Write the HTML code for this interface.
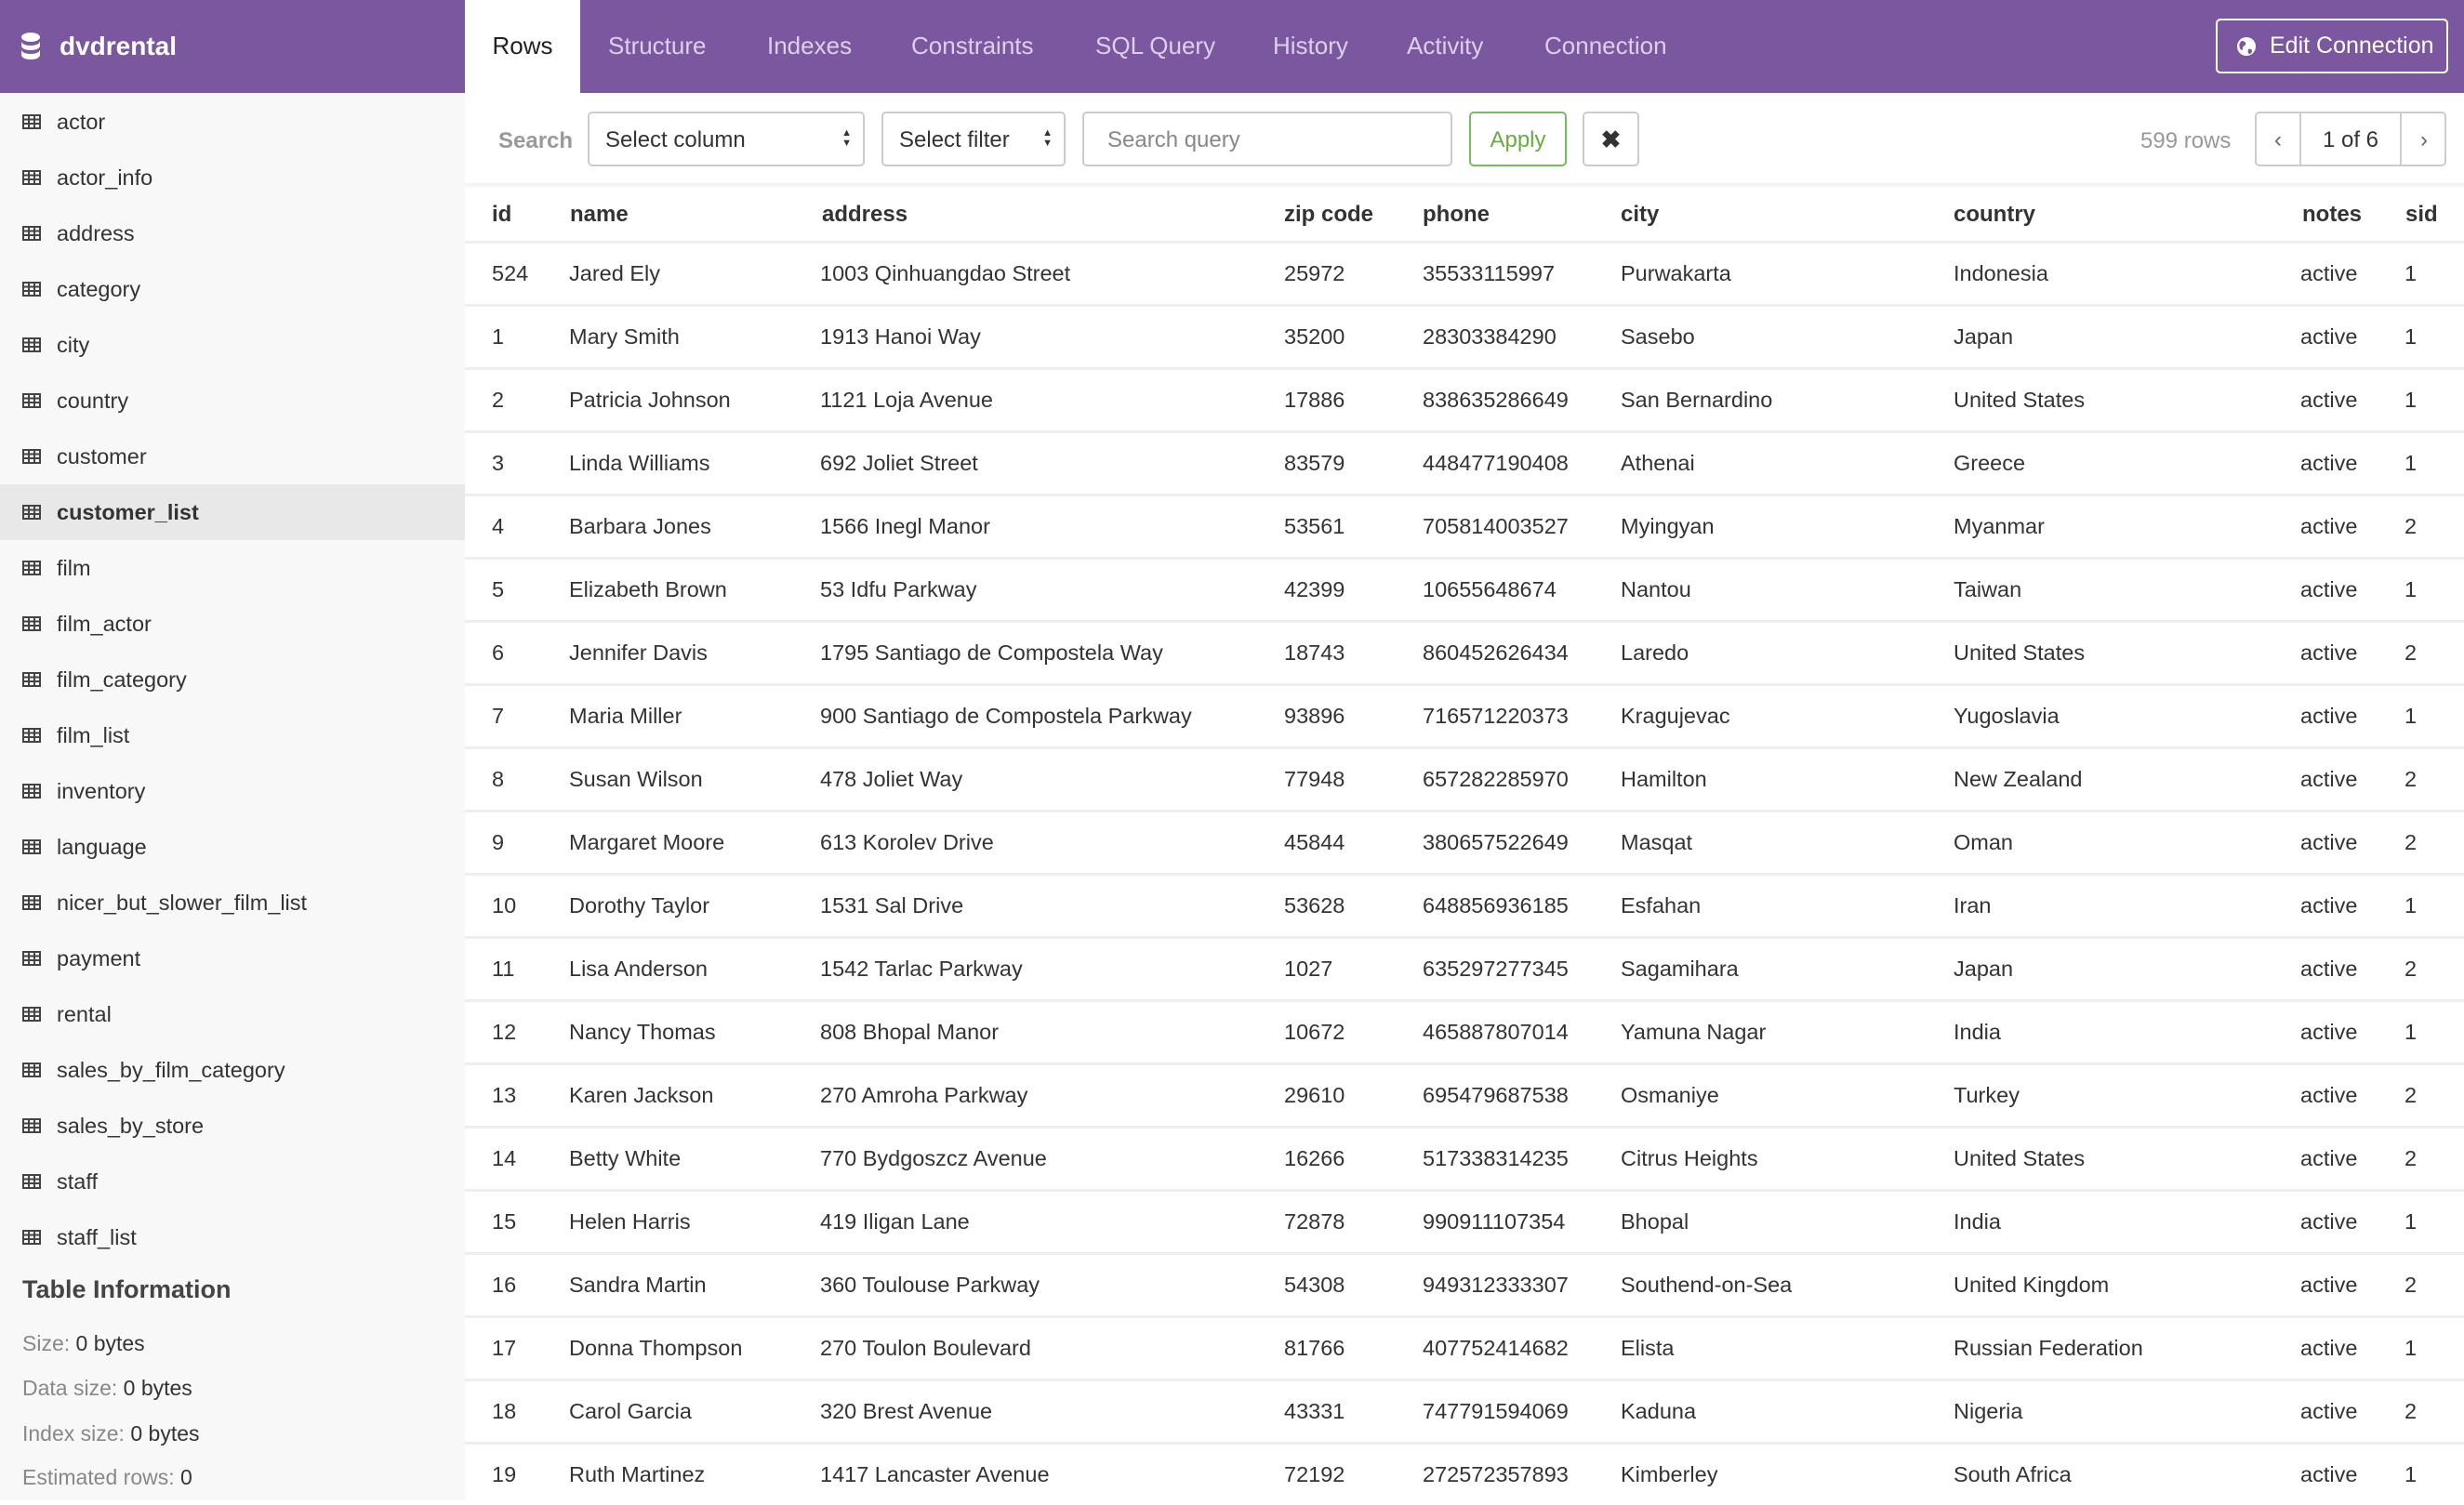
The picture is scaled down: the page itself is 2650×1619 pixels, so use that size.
<!DOCTYPE html>
<html><head><meta charset="utf-8"><style>
*{box-sizing:border-box;margin:0;padding:0}
body{width:2650px;height:1614px;overflow:hidden;font-family:"Liberation Sans",Helvetica,Arial,sans-serif;color:#333;background:#fff;position:relative}
.top{position:absolute;left:0;top:0;width:2650px;height:100px;background:#7a579e}
.brand{position:absolute;left:0;top:0;width:500px;height:100px;color:#fff;font-weight:bold;font-size:28px;line-height:100px;padding-left:64px}
.brand svg{position:absolute;left:23px;top:35px}
.tab{position:absolute;top:0;height:100px;line-height:98px;font-size:26px;color:#ddd0ea}
.tab.active{background:#fff;color:#222;left:500px;width:124px;text-align:center}
.editbtn{position:absolute;left:2383px;top:20px;width:250px;height:59px;border:2px solid #fff;border-radius:5px;color:#fff;font-size:25px;line-height:55px;padding-left:56px}
.editbtn svg{position:absolute;left:20px;top:17px}
.side{position:absolute;left:0;top:100px;width:500px;height:1514px;background:#f8f8f8}
.item{position:absolute;left:0;width:500px;height:60px;line-height:60px;font-size:23.5px;color:#333;padding-left:61px}
.item.sel{background:#e8e8e8;font-weight:bold}
.item svg{position:absolute;left:24px;top:22px}
.info{position:absolute;left:24px;font-size:23px;color:#888}
.info b{font-weight:normal;color:#333}
.lbl{position:absolute;left:536px;top:138px;font-size:24px;color:#999;font-weight:bold}
.box{position:absolute;top:120px;height:59px;border:2px solid #ccc;border-radius:5px;font-size:24px;line-height:57px;padding-left:17px;color:#333;background:#fff}
.arr{position:absolute;right:12px;top:16px;font-size:11px;line-height:11px;color:#333}
.shadow{position:absolute;left:500px;top:197px;width:2150px;height:6px;background:linear-gradient(#f0f0f0,#fff)}
.th{position:absolute;top:217px;font-size:24px;font-weight:bold;color:#333}
.row{position:absolute;left:500px;width:2150px;height:68px;border-top:3px solid #eeeeee}
.c{position:absolute;top:0;line-height:64px;font-size:23.5px;color:#333;white-space:nowrap}
</style></head><body>
<div class="top"></div>
<div class="brand"><svg width="20" height="30" viewBox="0 0 20 30"><ellipse cx="10" cy="5" rx="10" ry="5" fill="#fff"/><path d="M0 9c0 3 4 5 10 5s10-2 10-5v5c0 3-4 5-10 5S0 17 0 14z" fill="#fff"/><path d="M0 18c0 3 4 5 10 5s10-2 10-5v6c0 3-4 5-10 5S0 27 0 24z" fill="#fff"/></svg>dvdrental</div>
<div class="tab active">Rows</div>
<div class="tab" style="left:654px">Structure</div>
<div class="tab" style="left:825px">Indexes</div>
<div class="tab" style="left:980px">Constraints</div>
<div class="tab" style="left:1178px">SQL Query</div>
<div class="tab" style="left:1369px">History</div>
<div class="tab" style="left:1513px">Activity</div>
<div class="tab" style="left:1661px">Connection</div>
<div class="editbtn"><svg width="22" height="22" viewBox="0 0 22 22"><circle cx="11" cy="11" r="10" fill="#fff"/><path d="M6 5c3 0 5 2 4 4s-3 1-3 4-2 2-3 0C3 10 3 7 6 5zM13 14c2-1 4 0 4 2s-2 3-3 3-2-3-1-5z" fill="#7a579e"/></svg>Edit Connection</div>

<div class="side"></div>
<div style="position:absolute;left:0;top:3px">
<div class="item" style="top:98px"><svg width="20" height="16" viewBox="0 0 20 16"><path d="M1 1h18v14H1zM1 5.5h18M1 10h18M7 1v14M13 1v14" fill="none" stroke="#444" stroke-width="2"/></svg>actor</div>
<div class="item" style="top:158px"><svg width="20" height="16" viewBox="0 0 20 16"><path d="M1 1h18v14H1zM1 5.5h18M1 10h18M7 1v14M13 1v14" fill="none" stroke="#444" stroke-width="2"/></svg>actor_info</div>
<div class="item" style="top:218px"><svg width="20" height="16" viewBox="0 0 20 16"><path d="M1 1h18v14H1zM1 5.5h18M1 10h18M7 1v14M13 1v14" fill="none" stroke="#444" stroke-width="2"/></svg>address</div>
<div class="item" style="top:278px"><svg width="20" height="16" viewBox="0 0 20 16"><path d="M1 1h18v14H1zM1 5.5h18M1 10h18M7 1v14M13 1v14" fill="none" stroke="#444" stroke-width="2"/></svg>category</div>
<div class="item" style="top:338px"><svg width="20" height="16" viewBox="0 0 20 16"><path d="M1 1h18v14H1zM1 5.5h18M1 10h18M7 1v14M13 1v14" fill="none" stroke="#444" stroke-width="2"/></svg>city</div>
<div class="item" style="top:398px"><svg width="20" height="16" viewBox="0 0 20 16"><path d="M1 1h18v14H1zM1 5.5h18M1 10h18M7 1v14M13 1v14" fill="none" stroke="#444" stroke-width="2"/></svg>country</div>
<div class="item" style="top:458px"><svg width="20" height="16" viewBox="0 0 20 16"><path d="M1 1h18v14H1zM1 5.5h18M1 10h18M7 1v14M13 1v14" fill="none" stroke="#444" stroke-width="2"/></svg>customer</div>
<div class="item sel" style="top:518px"><svg width="20" height="16" viewBox="0 0 20 16"><path d="M1 1h18v14H1zM1 5.5h18M1 10h18M7 1v14M13 1v14" fill="none" stroke="#444" stroke-width="2"/></svg>customer_list</div>
<div class="item" style="top:578px"><svg width="20" height="16" viewBox="0 0 20 16"><path d="M1 1h18v14H1zM1 5.5h18M1 10h18M7 1v14M13 1v14" fill="none" stroke="#444" stroke-width="2"/></svg>film</div>
<div class="item" style="top:638px"><svg width="20" height="16" viewBox="0 0 20 16"><path d="M1 1h18v14H1zM1 5.5h18M1 10h18M7 1v14M13 1v14" fill="none" stroke="#444" stroke-width="2"/></svg>film_actor</div>
<div class="item" style="top:698px"><svg width="20" height="16" viewBox="0 0 20 16"><path d="M1 1h18v14H1zM1 5.5h18M1 10h18M7 1v14M13 1v14" fill="none" stroke="#444" stroke-width="2"/></svg>film_category</div>
<div class="item" style="top:758px"><svg width="20" height="16" viewBox="0 0 20 16"><path d="M1 1h18v14H1zM1 5.5h18M1 10h18M7 1v14M13 1v14" fill="none" stroke="#444" stroke-width="2"/></svg>film_list</div>
<div class="item" style="top:818px"><svg width="20" height="16" viewBox="0 0 20 16"><path d="M1 1h18v14H1zM1 5.5h18M1 10h18M7 1v14M13 1v14" fill="none" stroke="#444" stroke-width="2"/></svg>inventory</div>
<div class="item" style="top:878px"><svg width="20" height="16" viewBox="0 0 20 16"><path d="M1 1h18v14H1zM1 5.5h18M1 10h18M7 1v14M13 1v14" fill="none" stroke="#444" stroke-width="2"/></svg>language</div>
<div class="item" style="top:938px"><svg width="20" height="16" viewBox="0 0 20 16"><path d="M1 1h18v14H1zM1 5.5h18M1 10h18M7 1v14M13 1v14" fill="none" stroke="#444" stroke-width="2"/></svg>nicer_but_slower_film_list</div>
<div class="item" style="top:998px"><svg width="20" height="16" viewBox="0 0 20 16"><path d="M1 1h18v14H1zM1 5.5h18M1 10h18M7 1v14M13 1v14" fill="none" stroke="#444" stroke-width="2"/></svg>payment</div>
<div class="item" style="top:1058px"><svg width="20" height="16" viewBox="0 0 20 16"><path d="M1 1h18v14H1zM1 5.5h18M1 10h18M7 1v14M13 1v14" fill="none" stroke="#444" stroke-width="2"/></svg>rental</div>
<div class="item" style="top:1118px"><svg width="20" height="16" viewBox="0 0 20 16"><path d="M1 1h18v14H1zM1 5.5h18M1 10h18M7 1v14M13 1v14" fill="none" stroke="#444" stroke-width="2"/></svg>sales_by_film_category</div>
<div class="item" style="top:1178px"><svg width="20" height="16" viewBox="0 0 20 16"><path d="M1 1h18v14H1zM1 5.5h18M1 10h18M7 1v14M13 1v14" fill="none" stroke="#444" stroke-width="2"/></svg>sales_by_store</div>
<div class="item" style="top:1238px"><svg width="20" height="16" viewBox="0 0 20 16"><path d="M1 1h18v14H1zM1 5.5h18M1 10h18M7 1v14M13 1v14" fill="none" stroke="#444" stroke-width="2"/></svg>staff</div>
<div class="item" style="top:1298px"><svg width="20" height="16" viewBox="0 0 20 16"><path d="M1 1h18v14H1zM1 5.5h18M1 10h18M7 1v14M13 1v14" fill="none" stroke="#444" stroke-width="2"/></svg>staff_list</div>
<div style="position:absolute;left:24px;top:1369px;font-size:27px;font-weight:bold;color:#444;white-space:nowrap">Table Information</div>
<div class="info" style="top:1429px;white-space:nowrap">Size: <b>0 bytes</b></div>
<div class="info" style="top:1477px;white-space:nowrap">Data size: <b>0 bytes</b></div>
<div class="info" style="top:1526px;white-space:nowrap">Index size: <b>0 bytes</b></div>
<div class="info" style="top:1573px;white-space:nowrap">Estimated rows: <b>0</b></div>
</div>

<div class="lbl">Search</div>
<div class="box" style="left:632px;width:298px">Select column<div class="arr">▲<br>▼</div></div>
<div class="box" style="left:948px;width:198px">Select filter<div class="arr">▲<br>▼</div></div>
<div class="box" style="left:1164px;width:398px;color:#888;padding-left:25px">Search query</div>
<div class="box" style="left:1580px;width:105px;border-color:#7cb860;color:#6aaa45;text-align:center;padding:0">Apply</div>
<div class="box" style="left:1702px;width:61px;text-align:center;padding:0;font-weight:bold;font-size:26px">✖</div>
<div style="position:absolute;left:2302px;top:138px;font-size:24px;color:#999">599 rows</div>
<div class="box" style="left:2425px;width:206px;padding:0">
 <div style="position:absolute;left:0;top:0;width:48px;height:55px;border-right:2px solid #ccc;text-align:center;color:#666">‹</div>
 <div style="position:absolute;left:48px;top:0;width:106px;height:55px;text-align:center">1 of 6</div>
 <div style="position:absolute;left:154px;top:0;width:50px;height:55px;border-left:2px solid #ccc;text-align:center;color:#666">›</div>
</div>
<div class="shadow"></div>

<div class="th" style="left:529px">id</div>
<div class="th" style="left:613px">name</div>
<div class="th" style="left:884px">address</div>
<div class="th" style="left:1381px">zip code</div>
<div class="th" style="left:1530px">phone</div>
<div class="th" style="left:1743px">city</div>
<div class="th" style="left:2101px">country</div>
<div class="th" style="left:2476px">notes</div>
<div class="th" style="left:2587px">sid</div>

<div id="rows">
<div class="row" style="top:259px"><span class="c" style="left:29px">524</span><span class="c" style="left:112px">Jared Ely</span><span class="c" style="left:382px">1003 Qinhuangdao Street</span><span class="c" style="left:881px">25972</span><span class="c" style="left:1030px">35533115997</span><span class="c" style="left:1243px">Purwakarta</span><span class="c" style="left:1601px">Indonesia</span><span class="c" style="left:1974px">active</span><span class="c" style="left:2086px">1</span></div>
<div class="row" style="top:327px"><span class="c" style="left:29px">1</span><span class="c" style="left:112px">Mary Smith</span><span class="c" style="left:382px">1913 Hanoi Way</span><span class="c" style="left:881px">35200</span><span class="c" style="left:1030px">28303384290</span><span class="c" style="left:1243px">Sasebo</span><span class="c" style="left:1601px">Japan</span><span class="c" style="left:1974px">active</span><span class="c" style="left:2086px">1</span></div>
<div class="row" style="top:395px"><span class="c" style="left:29px">2</span><span class="c" style="left:112px">Patricia Johnson</span><span class="c" style="left:382px">1121 Loja Avenue</span><span class="c" style="left:881px">17886</span><span class="c" style="left:1030px">838635286649</span><span class="c" style="left:1243px">San Bernardino</span><span class="c" style="left:1601px">United States</span><span class="c" style="left:1974px">active</span><span class="c" style="left:2086px">1</span></div>
<div class="row" style="top:463px"><span class="c" style="left:29px">3</span><span class="c" style="left:112px">Linda Williams</span><span class="c" style="left:382px">692 Joliet Street</span><span class="c" style="left:881px">83579</span><span class="c" style="left:1030px">448477190408</span><span class="c" style="left:1243px">Athenai</span><span class="c" style="left:1601px">Greece</span><span class="c" style="left:1974px">active</span><span class="c" style="left:2086px">1</span></div>
<div class="row" style="top:531px"><span class="c" style="left:29px">4</span><span class="c" style="left:112px">Barbara Jones</span><span class="c" style="left:382px">1566 Inegl Manor</span><span class="c" style="left:881px">53561</span><span class="c" style="left:1030px">705814003527</span><span class="c" style="left:1243px">Myingyan</span><span class="c" style="left:1601px">Myanmar</span><span class="c" style="left:1974px">active</span><span class="c" style="left:2086px">2</span></div>
<div class="row" style="top:599px"><span class="c" style="left:29px">5</span><span class="c" style="left:112px">Elizabeth Brown</span><span class="c" style="left:382px">53 Idfu Parkway</span><span class="c" style="left:881px">42399</span><span class="c" style="left:1030px">10655648674</span><span class="c" style="left:1243px">Nantou</span><span class="c" style="left:1601px">Taiwan</span><span class="c" style="left:1974px">active</span><span class="c" style="left:2086px">1</span></div>
<div class="row" style="top:667px"><span class="c" style="left:29px">6</span><span class="c" style="left:112px">Jennifer Davis</span><span class="c" style="left:382px">1795 Santiago de Compostela Way</span><span class="c" style="left:881px">18743</span><span class="c" style="left:1030px">860452626434</span><span class="c" style="left:1243px">Laredo</span><span class="c" style="left:1601px">United States</span><span class="c" style="left:1974px">active</span><span class="c" style="left:2086px">2</span></div>
<div class="row" style="top:735px"><span class="c" style="left:29px">7</span><span class="c" style="left:112px">Maria Miller</span><span class="c" style="left:382px">900 Santiago de Compostela Parkway</span><span class="c" style="left:881px">93896</span><span class="c" style="left:1030px">716571220373</span><span class="c" style="left:1243px">Kragujevac</span><span class="c" style="left:1601px">Yugoslavia</span><span class="c" style="left:1974px">active</span><span class="c" style="left:2086px">1</span></div>
<div class="row" style="top:803px"><span class="c" style="left:29px">8</span><span class="c" style="left:112px">Susan Wilson</span><span class="c" style="left:382px">478 Joliet Way</span><span class="c" style="left:881px">77948</span><span class="c" style="left:1030px">657282285970</span><span class="c" style="left:1243px">Hamilton</span><span class="c" style="left:1601px">New Zealand</span><span class="c" style="left:1974px">active</span><span class="c" style="left:2086px">2</span></div>
<div class="row" style="top:871px"><span class="c" style="left:29px">9</span><span class="c" style="left:112px">Margaret Moore</span><span class="c" style="left:382px">613 Korolev Drive</span><span class="c" style="left:881px">45844</span><span class="c" style="left:1030px">380657522649</span><span class="c" style="left:1243px">Masqat</span><span class="c" style="left:1601px">Oman</span><span class="c" style="left:1974px">active</span><span class="c" style="left:2086px">2</span></div>
<div class="row" style="top:939px"><span class="c" style="left:29px">10</span><span class="c" style="left:112px">Dorothy Taylor</span><span class="c" style="left:382px">1531 Sal Drive</span><span class="c" style="left:881px">53628</span><span class="c" style="left:1030px">648856936185</span><span class="c" style="left:1243px">Esfahan</span><span class="c" style="left:1601px">Iran</span><span class="c" style="left:1974px">active</span><span class="c" style="left:2086px">1</span></div>
<div class="row" style="top:1007px"><span class="c" style="left:29px">11</span><span class="c" style="left:112px">Lisa Anderson</span><span class="c" style="left:382px">1542 Tarlac Parkway</span><span class="c" style="left:881px">1027</span><span class="c" style="left:1030px">635297277345</span><span class="c" style="left:1243px">Sagamihara</span><span class="c" style="left:1601px">Japan</span><span class="c" style="left:1974px">active</span><span class="c" style="left:2086px">2</span></div>
<div class="row" style="top:1075px"><span class="c" style="left:29px">12</span><span class="c" style="left:112px">Nancy Thomas</span><span class="c" style="left:382px">808 Bhopal Manor</span><span class="c" style="left:881px">10672</span><span class="c" style="left:1030px">465887807014</span><span class="c" style="left:1243px">Yamuna Nagar</span><span class="c" style="left:1601px">India</span><span class="c" style="left:1974px">active</span><span class="c" style="left:2086px">1</span></div>
<div class="row" style="top:1143px"><span class="c" style="left:29px">13</span><span class="c" style="left:112px">Karen Jackson</span><span class="c" style="left:382px">270 Amroha Parkway</span><span class="c" style="left:881px">29610</span><span class="c" style="left:1030px">695479687538</span><span class="c" style="left:1243px">Osmaniye</span><span class="c" style="left:1601px">Turkey</span><span class="c" style="left:1974px">active</span><span class="c" style="left:2086px">2</span></div>
<div class="row" style="top:1211px"><span class="c" style="left:29px">14</span><span class="c" style="left:112px">Betty White</span><span class="c" style="left:382px">770 Bydgoszcz Avenue</span><span class="c" style="left:881px">16266</span><span class="c" style="left:1030px">517338314235</span><span class="c" style="left:1243px">Citrus Heights</span><span class="c" style="left:1601px">United States</span><span class="c" style="left:1974px">active</span><span class="c" style="left:2086px">2</span></div>
<div class="row" style="top:1279px"><span class="c" style="left:29px">15</span><span class="c" style="left:112px">Helen Harris</span><span class="c" style="left:382px">419 Iligan Lane</span><span class="c" style="left:881px">72878</span><span class="c" style="left:1030px">990911107354</span><span class="c" style="left:1243px">Bhopal</span><span class="c" style="left:1601px">India</span><span class="c" style="left:1974px">active</span><span class="c" style="left:2086px">1</span></div>
<div class="row" style="top:1347px"><span class="c" style="left:29px">16</span><span class="c" style="left:112px">Sandra Martin</span><span class="c" style="left:382px">360 Toulouse Parkway</span><span class="c" style="left:881px">54308</span><span class="c" style="left:1030px">949312333307</span><span class="c" style="left:1243px">Southend-on-Sea</span><span class="c" style="left:1601px">United Kingdom</span><span class="c" style="left:1974px">active</span><span class="c" style="left:2086px">2</span></div>
<div class="row" style="top:1415px"><span class="c" style="left:29px">17</span><span class="c" style="left:112px">Donna Thompson</span><span class="c" style="left:382px">270 Toulon Boulevard</span><span class="c" style="left:881px">81766</span><span class="c" style="left:1030px">407752414682</span><span class="c" style="left:1243px">Elista</span><span class="c" style="left:1601px">Russian Federation</span><span class="c" style="left:1974px">active</span><span class="c" style="left:2086px">1</span></div>
<div class="row" style="top:1483px"><span class="c" style="left:29px">18</span><span class="c" style="left:112px">Carol Garcia</span><span class="c" style="left:382px">320 Brest Avenue</span><span class="c" style="left:881px">43331</span><span class="c" style="left:1030px">747791594069</span><span class="c" style="left:1243px">Kaduna</span><span class="c" style="left:1601px">Nigeria</span><span class="c" style="left:1974px">active</span><span class="c" style="left:2086px">2</span></div>
<div class="row" style="top:1551px"><span class="c" style="left:29px">19</span><span class="c" style="left:112px">Ruth Martinez</span><span class="c" style="left:382px">1417 Lancaster Avenue</span><span class="c" style="left:881px">72192</span><span class="c" style="left:1030px">272572357893</span><span class="c" style="left:1243px">Kimberley</span><span class="c" style="left:1601px">South Africa</span><span class="c" style="left:1974px">active</span><span class="c" style="left:2086px">1</span></div>
</div>
</body></html>
